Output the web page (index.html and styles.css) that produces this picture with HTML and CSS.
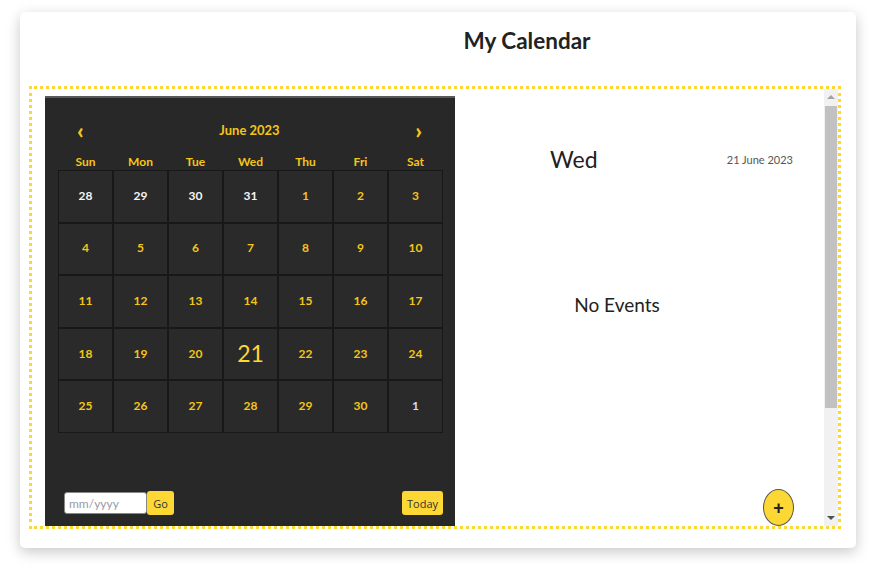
FILE: index.html
```html
<!DOCTYPE html>
<html>
<head>
<meta charset="utf-8">
<link rel="stylesheet" href="styles.css">
</head>
<body>
<div class="card">
  <h1 class="title">My Calendar</h1>
  <div class="frame">
    <div class="left">
      <div class="cal">
        <div class="cal-head">
          <span class="nav">&#8249;</span>
          <span class="month">June 2023</span>
          <span class="nav">&#8250;</span>
        </div>
        <div class="weekdays">
          <span>Sun</span><span>Mon</span><span>Tue</span><span>Wed</span><span>Thu</span><span>Fri</span><span>Sat</span>
        </div>
        <div class="grid">
          <div class="day prev">28</div><div class="day prev">29</div><div class="day prev">30</div><div class="day prev">31</div><div class="day">1</div><div class="day">2</div><div class="day">3</div>
          <div class="day">4</div><div class="day">5</div><div class="day">6</div><div class="day">7</div><div class="day">8</div><div class="day">9</div><div class="day">10</div>
          <div class="day">11</div><div class="day">12</div><div class="day">13</div><div class="day">14</div><div class="day">15</div><div class="day">16</div><div class="day">17</div>
          <div class="day">18</div><div class="day">19</div><div class="day">20</div><div class="day today">21</div><div class="day">22</div><div class="day">23</div><div class="day">24</div>
          <div class="day">25</div><div class="day">26</div><div class="day">27</div><div class="day">28</div><div class="day">29</div><div class="day">30</div><div class="day next">1</div>
        </div>
        <div class="cal-foot">
          <div class="goto">
            <input class="goto-input" type="text" placeholder="mm/yyyy">
            <button class="btn go">Go</button>
          </div>
          <button class="btn today-btn">Today</button>
        </div>
      </div>
    </div>
    <div class="right">
      <div class="right-head">
        <span class="dayname">Wed</span>
        <span class="fulldate">21 June 2023</span>
      </div>
      <div class="events">No Events</div>
      <div class="add-row"><button class="add">+</button></div>
    </div>
    <div class="scrollbar">
      <div class="arrow up"></div>
      <div class="thumb-track"><div class="thumb"></div></div>
      <div class="arrow down"></div>
    </div>
  </div>
</div>
</body>
</html>
```
FILE: styles.css
```css
* { box-sizing: border-box; }
html, body { margin: 0; padding: 0; background: #fff; }
body {
  font-family: "Lato", "Open Sans", sans-serif;
  padding: 12px 20px 0 20px;
  height: 576px;
}
.card {
  width: 836px;
  height: 536px;
  background: #fff;
  border-radius: 5px;
  box-shadow: 0 4px 14px rgba(0,0,0,0.22);
  display: flex;
  flex-direction: column;
}
.title {
  margin: 0;
  height: 74px;
  font-size: 22.5px;
  font-weight: 700;
  color: #222;
  text-align: center;
  line-height: 58px;
  padding-left: 178px;
}
.frame {
  margin-left: 9px;
  width: 812px;
  height: 443px;
  border: 3px dotted #fdd835;
  display: flex;
}
.left {
  padding: 7px 0 0 13px;
  display: flex;
}
.cal {
  width: 410px;
  background: #282828;
  border-top: 2px solid #5a5a5a;
  display: flex;
  flex-direction: column;
  padding: 0 12px 0 13px;
}
.cal-head {
  height: 60px;
  display: flex;
  align-items: center;
  justify-content: space-between;
  padding: 4px 21px 0 19px;
  color: #f5c518;
}
.nav { font-size: 23px; font-weight: 900; line-height: 1; }
.month { font-size: 13px; font-weight: 700; }
.weekdays {
  display: grid;
  grid-template-columns: repeat(7, 55px);
  color: #f5c518;
  font-size: 12px;
  font-weight: 700;
  text-align: center;
  height: 12px;
  line-height: 8px;
}
.grid {
  display: grid;
  grid-template-columns: repeat(7, 55px);
  grid-auto-rows: 52.6px;
}
.day {
  border: 1.5px solid #181818;
  background: #2a2a2a;
  color: #f5c518;
  font-size: 12px;
  font-weight: 700;
  display: flex;
  align-items: center;
  justify-content: center;
  padding-bottom: 2px;
}
.day.prev { color: #f4f4f4; }
.day.next { color: #d7dcff; }
.day.today { font-size: 23px; font-weight: 400; color: #ffd633; }
.cal-foot {
  margin-top: auto;
  display: flex;
  justify-content: space-between;
  align-items: center;
  padding: 0 0 11px 6px;
}
.goto { display: flex; align-items: center; }
.goto-input {
  width: 83px;
  height: 22px;
  border: 1px solid #888;
  border-radius: 3px;
  padding: 0 4px;
  font-family: "Lato", sans-serif;
  font-size: 12px;
}
.goto-input::placeholder { color: #9a9aa8; }
.btn {
  background: #fdd835;
  border: none;
  border-radius: 3px;
  height: 24px;
  font-family: "Open Sans", sans-serif;
  font-size: 11px;
  color: #333;
  padding: 0;
}
.go { width: 27px; }
.today-btn { width: 41px; }
.right {
  flex: 1;
  display: flex;
  flex-direction: column;
  background: #fff;
}
.right-head {
  display: flex;
  justify-content: space-between;
  align-items: center;
  padding: 55px 31px 0 95px;
  height: 85px;
}
.dayname { font-size: 23px; color: #222; }
.fulldate { font-size: 11px; color: #555; }
.events {
  text-align: center;
  padding-right: 45px;
  margin-top: 119px;
  font-size: 19px;
  color: #222;
}
.add-row {
  margin-top: auto;
  display: flex;
  justify-content: flex-end;
  padding-right: 30px;
}
.add {
  width: 31px;
  height: 37px;
  border-radius: 50%;
  background: #fdd835;
  border: 1px solid #555;
  font-size: 18px;
  font-weight: 700;
  color: #222;
  padding: 0;
  line-height: 1;
}
.scrollbar {
  width: 14px;
  background: #f1f1f1;
  display: flex;
  flex-direction: column;
}
.arrow { height: 17px; position: relative; }
.arrow::after {
  content: "";
  position: absolute;
  left: 3px;
  border-left: 4px solid transparent;
  border-right: 4px solid transparent;
}
.arrow.up::after { top: 6px; border-bottom: 4px solid #a3a3a3; }
.arrow.down::after { top: 7px; border-top: 4px solid #505050; }
.thumb-track { flex: 1; padding: 0 1px; }
.thumb { height: 302px; background: #c1c1c1; }
```
